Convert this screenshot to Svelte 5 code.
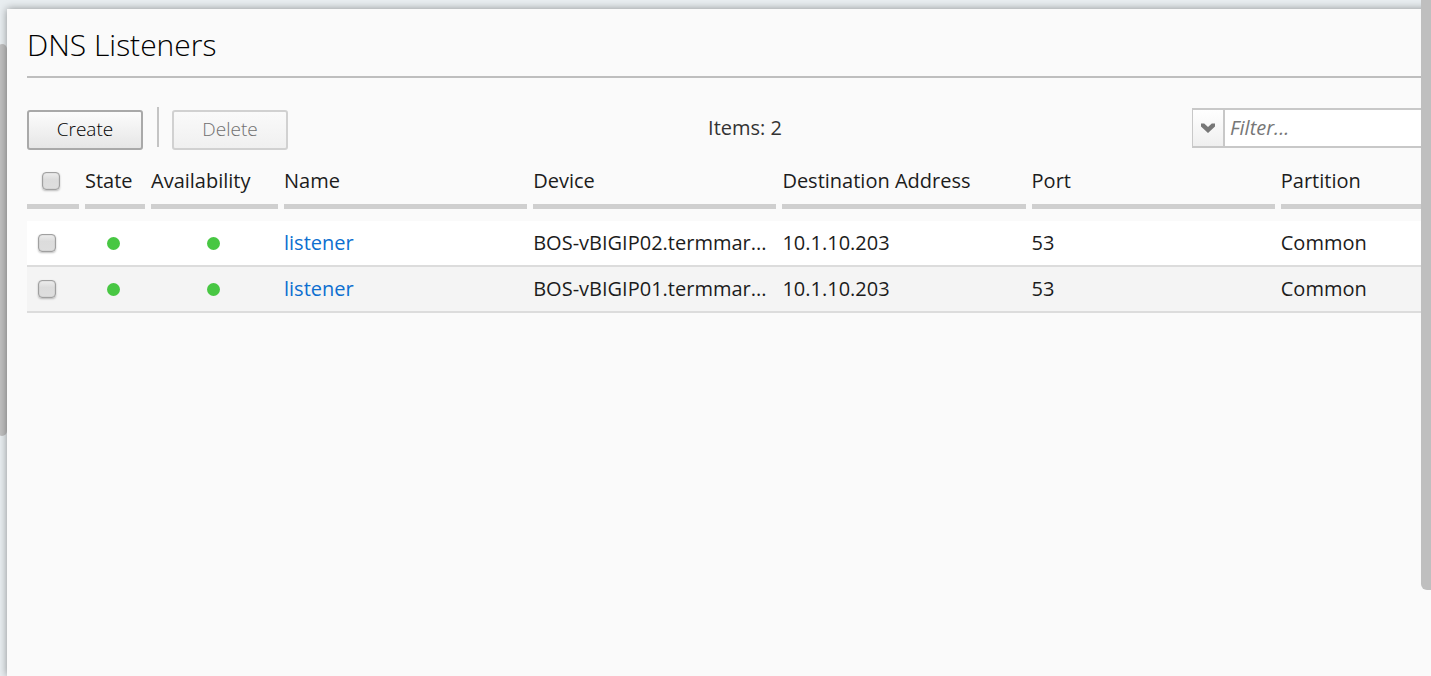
<script>
  let rows = $state([
    { id: 1, selected: false, name: 'listener', device: 'BOS-vBIGIP02.termmar...', address: '10.1.10.203', port: '53', partition: 'Common' },
    { id: 2, selected: false, name: 'listener', device: 'BOS-vBIGIP01.termmar...', address: '10.1.10.203', port: '53', partition: 'Common' }
  ]);
  let filter = $state('');
  const columns = ['State', 'Availability', 'Name', 'Device', 'Destination Address', 'Port', 'Partition'];
  const allSelected = $derived(rows.every((r) => r.selected));
  const noneSelected = $derived(rows.every((r) => !r.selected));

  function toggleAll(event) {
    const on = event.currentTarget.checked;
    for (const r of rows) r.selected = on;
  }
</script>

<div class="page">
  <div class="thumb left"></div>
  <main class="panel">
    <div class="content">
      <h1>DNS Listeners</h1>

      <div class="toolbar">
        <button class="btn" type="button">Create</button>
        <span class="divider"></span>
        <button class="btn" type="button" disabled={noneSelected}>Delete</button>
        <span class="count">Items: {rows.length}</span>
        <div class="filter">
          <button type="button" aria-label="Filter options">
            <svg width="16" height="12" viewBox="0 0 16 12">
              <path d="M1 1.500h3.200L8 5l3.800-3.500H15V4.500L8 11 1 4.500z" fill="#777" />
            </svg>
          </button>
          <input type="text" aria-label="Filter" placeholder="Filter..." bind:value={filter} />
        </div>
      </div>

      <table>
        <colgroup>
          <col class="c-check" />
          <col class="c-state" />
          <col class="c-avail" />
          <col /><col /><col /><col /><col />
        </colgroup>
        <thead>
          <tr>
            <th class="pick"><div><input type="checkbox" aria-label="Select all" checked={allSelected} onchange={toggleAll} /></div></th>
            {#each columns as column}
              <th><div>{column}</div></th>
            {/each}
          </tr>
        </thead>
        <tbody>
          {#each rows as row (row.id)}
            <tr>
              <td class="pick"><input type="checkbox" aria-label="Select {row.name}" bind:checked={row.selected} /></td>
              <td class="status"><span class="dot"></span></td>
              <td class="status"><span class="dot"></span></td>
              <td><a href="#listener">{row.name}</a></td>
              <td>{row.device}</td>
              <td>{row.address}</td>
              <td>{row.port}</td>
              <td>{row.partition}</td>
            </tr>
          {/each}
        </tbody>
      </table>
    </div>
  </main>
  <div class="thumb right"></div>
</div>

<style>
  :global(body) {
    margin: 0;
    background: #e6ebee;
  }
  .page {
    position: relative;
    box-sizing: border-box;
    min-height: 100vh;
    padding: 9px 0 0 7px;
    display: flex;
    overflow: hidden;
    background: #e8edf0;
    color: #1c1c1c;
    font: 20px/28px "Open Sans", "Noto Sans", sans-serif;
  }
  .panel {
    position: relative;
    flex: 1;
    min-width: 0;
    background: #fafafa;
    box-shadow: 0 0 8px rgba(0, 0, 0, 0.4);
  }
  .content {
    margin: 0 -99px 0 20px;
  }
  .thumb {
    position: absolute;
    background: #bfbfbf;
  }
  .thumb.left {
    left: -3px;
    top: 44px;
    width: 10px;
    height: 392px;
    border-radius: 5px;
  }
  .thumb.right {
    right: 0;
    top: 0;
    width: 10px;
    height: 590px;
    border-radius: 0 0 0 6px;
  }
  h1 {
    margin: 0;
    padding: 16px 0 11px;
    border-bottom: 2px solid #bebebe;
    color: #000;
    font-size: 30px;
    font-weight: 300;
    line-height: 40px;
  }
  .toolbar {
    display: flex;
    padding-top: 29px;
  }
  .btn {
    box-sizing: border-box;
    width: 116px;
    height: 40px;
    margin-top: 3px;
    padding: 0 0 3px;
    border: 2px solid #a9a9a9;
    border-radius: 3px;
    background: linear-gradient(#fcfcfc, #e6e6e6);
    color: #000;
    font: inherit;
    font-weight: 300;
    font-size: 19px;
  }
  .btn:disabled {
    border-color: #d1d1d1;
    background: linear-gradient(#fafafa, #f0f0f0);
    color: #707070;
  }
  .divider {
    width: 2px;
    height: 40px;
    margin: 0 13px 0 14px;
    background: #c4c4c4;
  }
  .count {
    flex: 1;
    padding: 7px 0 0 10px;
    color: #333;
    text-align: center;
  }
  .filter {
    box-sizing: border-box;
    display: flex;
    width: 338px;
    height: 40px;
    margin-top: 1px;
    border: 2px solid #c8c8c8;
    border-left-width: 1px;
    background: #fff;
  }
  .filter button {
    display: flex;
    align-items: center;
    justify-content: center;
    box-sizing: border-box;
    width: 32px;
    padding: 0;
    border: 0;
    border-right: 2px solid #c8c8c8;
    background: linear-gradient(#fff, #efefef);
  }
  .filter input {
    flex: 1;
    min-width: 0;
    padding: 0 5px;
    border: 0;
    background: none;
    font: inherit;
    outline: none;
  }
  .filter input::placeholder {
    color: #777;
    font-style: italic;
  }
  table {
    width: 100%;
    table-layout: fixed;
    border-collapse: separate;
    border-spacing: 0;
  }
  .c-check { width: 58px; }
  .c-state { width: 66px; }
  .c-avail { width: 133px; }
  th {
    padding: 17px 6px 12px 0;
    font-weight: 400;
    text-align: left;
  }
  th div {
    height: 37px;
    border-bottom: 5px solid #cfcfcf;
    white-space: nowrap;
  }
  td {
    height: 44px;
    padding: 0 6px 0 0;
    border-bottom: 2px solid #dcdcdc;
    overflow: hidden;
    text-overflow: ellipsis;
    white-space: nowrap;
  }
  tbody tr {
    background: #fff;
  }
  tbody tr:nth-child(even) {
    background: #f4f4f4;
  }
  input[type="checkbox"] {
    appearance: none;
    display: block;
    box-sizing: border-box;
    width: 18px;
    height: 18px;
    margin: 0;
    border: 1px solid #a0a0a0;
    border-radius: 4px;
    background: linear-gradient(#ededed, #dcdcdc 40%, #dedede);
    box-shadow: 0 1px 2px rgba(0, 0, 0, 0.25), inset 0 0 1px #888;
  }
  input[type="checkbox"]:checked {
    background: #6f9fd8;
  }
  td.pick {
    padding-left: 11px;
  }
  th.pick div {
    box-sizing: border-box;
    height: 42px;
    padding: 5px 0 0 15px;
  }
  td.status {
    padding-right: 9px;
  }
  .dot {
    display: block;
    width: 13px;
    height: 13px;
    margin: 0 auto;
    border-radius: 50%;
    background: #48c743;
  }
  a {
    color: #0d6fd0;
    text-decoration: none;
  }
</style>
